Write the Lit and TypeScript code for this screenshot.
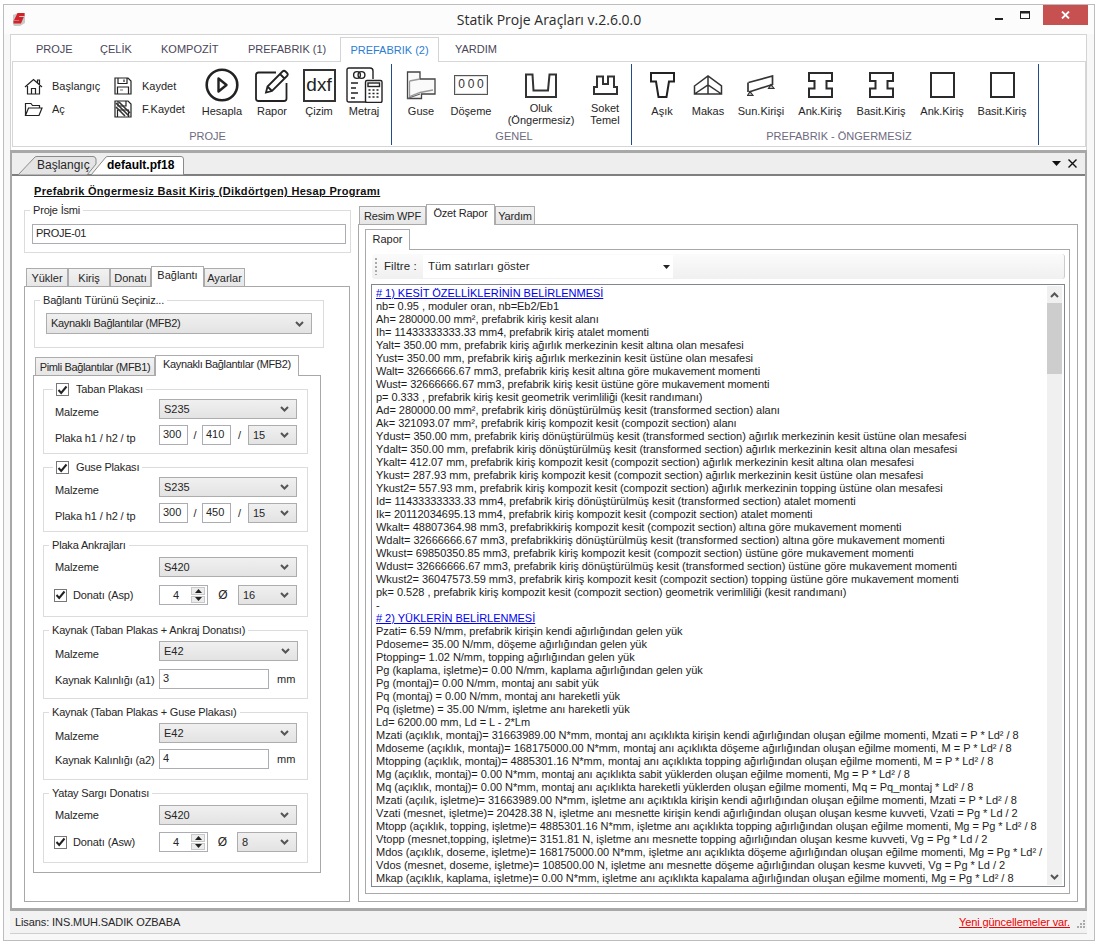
import { LitElement, html, css, svg } from "lit";
import { customElement } from "lit/decorators.js";

const REPORT: [string, boolean?][] = [
  ["# 1) KESİT ÖZELLİKLERİNİN BELİRLENMESİ", true],
  ["nb= 0.95 , moduler oran, nb=Eb2/Eb1"],
  ["Ah= 280000.00 mm², prefabrik kiriş kesit alanı"],
  ["Ih= 11433333333.33 mm4, prefabrik kiriş atalet momenti"],
  ["Yalt= 350.00 mm, prefabrik kiriş ağırlık merkezinin kesit altına olan mesafesi"],
  ["Yust= 350.00 mm, prefabrik kiriş ağırlık merkezinin kesit üstüne olan mesafesi"],
  ["Walt= 32666666.67 mm3, prefabrik kiriş kesit altına göre mukavement momenti"],
  ["Wust= 32666666.67 mm3, prefabrik kiriş kesit üstüne göre mukavement momenti"],
  ["p= 0.333 , prefabrik kiriş kesit geometrik verimliliği (kesit randımanı)"],
  ["Ad= 280000.00 mm², prefabrik kiriş dönüştürülmüş kesit (transformed section) alanı"],
  ["Ak= 321093.07 mm², prefabrik kiriş kompozit kesit (compozit section) alanı"],
  ["Ydust= 350.00 mm, prefabrik kiriş dönüştürülmüş kesit (transformed section) ağırlık merkezinin kesit üstüne olan mesafesi"],
  ["Ydalt= 350.00 mm, prefabrik kiriş dönüştürülmüş kesit (transformed section) ağırlık merkezinin kesit altına olan mesafesi"],
  ["Ykalt= 412.07 mm, prefabrik kiriş kompozit kesit (compozit section) ağırlık merkezinin kesit altına olan mesafesi"],
  ["Ykust= 287.93 mm, prefabrik kiriş kompozit kesit (compozit section) ağırlık merkezinin kesit üstüne olan mesafesi"],
  ["Ykust2= 557.93 mm, prefabrik kiriş kompozit kesit (compozit section) ağırlık merkezinin topping üstüne olan mesafesi"],
  ["Id= 11433333333.33 mm4, prefabrik kiriş dönüştürülmüş kesit (transformed section) atalet momenti"],
  ["Ik= 20112034695.13 mm4, prefabrik kiriş kompozit kesit (compozit section) atalet momenti"],
  ["Wkalt= 48807364.98 mm3, prefabrikkiriş kompozit kesit (compozit section) altına göre mukavement momenti"],
  ["Wdalt= 32666666.67 mm3, prefabrikkiriş dönüştürülmüş kesit (transformed section) altına göre mukavement momenti"],
  ["Wkust= 69850350.85 mm3, prefabrik kiriş kompozit kesit (compozit section) üstüne göre mukavement momenti"],
  ["Wdust= 32666666.67 mm3, prefabrik kiriş dönüştürülmüş kesit (transformed section) üstüne göre mukavement momenti"],
  ["Wkust2= 36047573.59 mm3, prefabrik kiriş kompozit kesit (compozit section) topping üstüne göre mukavement momenti"],
  ["pk= 0.528 , prefabrik kiriş kompozit kesit (compozit section) geometrik verimliliği (kesit randımanı)"],
  ["-"],
  ["# 2) YÜKLERİN BELİRLENMESİ", true],
  ["Pzati= 6.59 N/mm, prefabrik kirişin kendi ağırlığından gelen yük"],
  ["Pdoseme= 35.00 N/mm, döşeme ağırlığından gelen yük"],
  ["Ptopping= 1.02 N/mm, topping ağırlığından gelen yük"],
  ["Pg (kaplama, işletme)= 0.00 N/mm, kaplama ağırlığından gelen yük"],
  ["Pg (montaj)= 0.00 N/mm, montaj anı sabit yük"],
  ["Pq (montaj) = 0.00 N/mm, montaj anı hareketli yük"],
  ["Pq (işletme) = 35.00 N/mm, işletme anı hareketli yük"],
  ["Ld= 6200.00 mm, Ld = L - 2*Lm"],
  ["Mzati (açıklık, montaj)= 31663989.00 N*mm, montaj anı açıklıkta kirişin kendi ağırlığından oluşan eğilme momenti, Mzati = P * Ld² / 8"],
  ["Mdoseme (açıklık, montaj)= 168175000.00 N*mm, montaj anı açıklıkta döşeme ağırlığından oluşan eğilme momenti, M = P * Ld² / 8"],
  ["Mtopping (açıklık, montaj)= 4885301.16 N*mm, montaj anı açıklıkta topping ağırlığından oluşan eğilme momenti, M = P * Ld² / 8"],
  ["Mg (açıklık, montaj)= 0.00 N*mm, montaj anı açıklıkta sabit yüklerden oluşan eğilme momenti, Mg = P * Ld² / 8"],
  ["Mq (açıklık, montaj)= 0.00 N*mm, montaj anı açıklıkta hareketli yüklerden oluşan eğilme momenti, Mq = Pq_montaj * Ld² / 8"],
  ["Mzati (açılık, işletme)= 31663989.00 N*mm, işletme anı açıktıkla kirişin kendi ağırlığından oluşan eğilme momenti, Mzati = P * Ld² / 8"],
  ["Vzati (mesnet, işletme)= 20428.38 N, işletme anı mesnette kirişin kendi ağırlığından oluşan oluşan kesme kuvveti, Vzati = Pg * Ld / 2"],
  ["Mtopp (açıklık, topping, işletme)= 4885301.16 N*mm, işletme anı açıklıkta topping ağırlığından oluşan eğilme momenti, Mg = Pg * Ld² / 8"],
  ["Vtopp (mesnet,topping, işletme)= 3151.81 N, işletme anı mesnette topping ağırlığından oluşan kesme kuvveti, Vg = Pg * Ld / 2"],
  ["Mdos (açıklık, doseme, işletme)= 168175000.00 N*mm, işletme anı açıklıkta döşeme ağırlığından oluşan eğilme momenti, Mg = Pg * Ld² /"],
  ["Vdos (mesnet, doseme, işletme)= 108500.00 N, işletme anı mesnette döşeme ağırlığından oluşan kesme kuvveti, Vg = Pg * Ld / 2"],
  ["Mkap (açıklık, kaplama, işletme)= 0.00 N*mm, işletme anı açıklıkta kapalama ağırlığından oluşan eğilme momenti, Mg = Pg * Ld² / 8"],
];

const ic = (w: number, h: number, body: unknown) =>
  html`<svg width=${w} height=${h} viewBox="0 0 ${w} ${h}" fill="none" stroke="#222" stroke-width="1.2">${body}</svg>`;

const ICONS = {
  home: ic(19, 17, svg`<path d="M1 9 L9.5 1.5 L18 9 M13.5 5 V2 H15.5 V7 M3.5 8 V16 H15.5 V8 M7.5 16 V10.5 H11.5 V16"/>`),
  folder: ic(19, 16, svg`<path d="M1.5 14.5 V2.5 H7 L8.5 4.5 H15.5 V7 M1.5 14.5 L4.5 7 H18 L15 14.5 Z"/>`),
  save: ic(18, 18, svg`<path d="M1 1 H14 L17 4 V17 H1 Z M4 1 V6.5 H13 V1 M10 2.5 V5 M3.5 17 V10 H14.5 V17" /><path d="M6 13 H9" stroke="#888"/>`),
  saveas: ic(18, 18, svg`<path d="M1 1 H14 L17 4 V17 H1 Z M4 1 V6 H12 V1 M3.5 17 V10 H14.5 V17" /><path d="M2 3 L15 16 M5 2 L16 13 M2 7 L11 16" stroke-width="1.6" stroke="#333"/>`),
  play: ic(34, 34, svg`<circle cx="17" cy="17" r="15.3" stroke-width="2.6"/><path d="M13.5 10.5 L21.5 17 L13.5 23.5 Z" stroke-width="2.4" stroke-linejoin="round"/>`),
  report: ic(34, 33, svg`<path d="M21 3.5 H3.5 Q1 3.5 1 6 V29.5 Q1 32 3.5 32 H29 Q31.5 32 31.5 29.5 V14" stroke-width="1.8"/><path d="M11 23.5 L12.5 17.5 L27.5 2.5 Q29 1 30.5 2.5 L32 4 Q33.5 5.5 32 7 L17 22 Z M25 5 L29.5 9.5 M12.5 17.5 L17 22" stroke-width="1.8"/>`),
  metraj: html`<svg width="37" height="36" viewBox="0 0 37 36" fill="none" stroke="#222" stroke-width="1.4"><path d="M21 35 H3 Q1 35 1 33 V3 Q1 1 3 1 H24 Q27 1 27 4 V12" /><circle cx="11" cy="8" r="3.4"/><circle cx="15.5" cy="8" r="3.4"/><path d="M5 16 H12 M5 21 H10 M5 26 H12 M5 31 H9" stroke-width="1.5"/><rect x="19.5" y="13.5" width="16.5" height="22" rx="1.5" fill="#fff"/><rect x="22" y="16" width="11.5" height="3.5" /><path d="M22.5 23 H24.5 M26.5 23 H28.5 M30.5 23 H32.5 M22.5 26.5 H24.5 M26.5 26.5 H28.5 M30.5 26.5 H32.5 M22.5 30 H24.5 M26.5 30 H28.5 M30.5 30 H32.5 " stroke-width="1.6"/></svg>`,
  guse: html`<svg width="30" height="29" viewBox="0 0 30 29" fill="none" stroke="#444" stroke-width="1.3"><path d="M1.5 1 H14 V8 H29 V23 H15.5 V27.5 H1.5 Z" fill="#fafafa"/><path d="M3.5 10 V25.5 L14 21.5 L27 19 M3.5 10 L14 8" stroke="#999"/><path d="M1.5 27.5 L14 23" stroke="#666"/></svg>`,
  oluk: ic(32, 25, svg`<path d="M1 1.5 H7.5 L8.5 17.5 H23 L24.5 1.5 H31 V24 H1 Z" stroke-width="2" stroke="#333"/>`),
  soket: ic(25, 20, svg`<path d="M1 19 V12 H4 V1.5 H10 V9 H15 V1.5 H21 V12 H24 V19 Z" stroke-width="2" stroke="#333"/>`),
  asik: ic(25, 26, svg`<path d="M1 1 H24 V9.5 H19 L16.5 25 H8.5 L6 9.5 H1 Z" stroke-width="2" stroke="#222"/>`),
  makas: ic(30, 22, svg`<path d="M1.5 12 L15 2 L28.5 12 V20 H1.5 Z M15 2 V20 M1.5 20 L15 11 L28.5 20" stroke-width="1.5" stroke="#333"/>`),
  sun: ic(28, 21, svg`<path d="M1.5 7.5 L25.5 1 V9.5 L2 17" stroke-width="1.7" stroke="#333"/><path d="M1 7.5 V17" stroke-width="1.7" stroke="#333"/><path d="M3 16.5 L6 20.5 H0.5 Z M24 9.5 L27 13.5 H21.5 Z" stroke="#333" fill="#bbb" stroke-width="1.2"/>`),
  ibeam: ic(25, 26, svg`<path d="M1 1 H24 V9 H18.5 V16.5 H24 V25 H1 V16.5 H6.5 V9 H1 Z" stroke-width="2" stroke="#2b2b2b"/>`),
  rect: ic(25, 26, svg`<rect x="1" y="1" width="23" height="24" stroke-width="2" stroke="#2b2b2b"/>`),
};

const TOP_TABS = ["PROJE", "ÇELİK", "KOMPOZİT", "PREFABRIK (1)", "PREFABRIK (2)", "YARDIM"];
const TOP_W = [64, 61, 87, 103, 99, 70];
const TOP_P = [11, 11, 11, 11, 0, 16];

const GENEL = [
  { t: ["Guse"], w: 48, i: ICONS.guse },
  { t: ["Döşeme"], w: 52, i: null },
  { t: ["Oluk", "(Öngermesiz)"], w: 88, i: ICONS.oluk },
  { t: ["Soket", "Temel"], w: 40, i: ICONS.soket },
];
const PREF = [
  { t: ["Aşık"], w: 44, i: ICONS.asik },
  { t: ["Makas"], w: 48, i: ICONS.makas },
  { t: ["Sun.Kirişi"], w: 58, i: ICONS.sun },
  { t: ["Ank.Kiriş"], w: 60, i: ICONS.ibeam },
  { t: ["Basit.Kiriş"], w: 62, i: ICONS.ibeam },
  { t: ["Ank.Kiriş"], w: 60, i: ICONS.rect },
  { t: ["Basit.Kiriş"], w: 60, i: ICONS.rect },
];

const chevron = html`<svg class="chev" width="9" height="6" viewBox="0 0 9 6" fill="none" stroke="#555" stroke-width="2"><path d="M1 1 L4.5 4.5 L8 1"/></svg>`;

@customElement("app-root")
export class AppRoot extends LitElement {
  static styles = css`
    :host { display: block; width: 1099px; height: 943px; background: #fff; overflow: hidden;
      font: 11px/13px "Liberation Sans", Arial, sans-serif; color: #262626; }
    * { box-sizing: border-box; }
    .win { margin: 4px 0 0 3px; width: 1092px; height: 937px; border: 1px solid #bdbdbd; background: #fff; display: flex; flex-direction: column; }
    .titlebar { height: 29px; flex: none; display: grid; grid-template-columns: 1fr auto 1fr; background: #fcfcfc; }
    .logo { margin: 7px 0 0 8px; }
    .title { font: 14px/30px "Open Sans", sans-serif; color: #2b2b2b; }
    .wbtns { display: flex; justify-content: flex-end; padding-right: 6px; height: 20px; }
    .wb { width: 26px; height: 20px; display: flex; align-items: center; justify-content: center; }
    .wb.close { width: 45px; background: #c75050; margin-left: 5px; }
    .body { flex: 1; padding: 0 7px 0 6px; background: #f8f8f8; display: flex; flex-direction: column; }
    .ribbonwrap { height: 116px; flex: none; border: 1px solid #d4d4d4; border-bottom: none; background: #fff; display: flex; flex-direction: column; }
    .toptabs { height: 26px; flex: none; display: flex; padding-left: 14px; align-items: flex-end; }
    .tt { height: 24px; line-height: 25px; text-align: left; color: #4a4658; white-space: nowrap; }
    .tt.on { text-align: center; border: 1px solid #d4d4d4; border-bottom: none; background: #fff; color: #2b7cd3; margin-bottom: -1px; height: 25px; position: relative; z-index: 1; }
    .ribbon { height: 86px; flex: none; margin: 0 0 0 1px; border: 1px solid #d6d6d6; display: flex; background: #fff; }
    .grp { display: flex; flex-direction: column; }
    .sep { width: 1px; background: #1f4e8c; margin: 2px 0 1px; flex: none; }
    .g1 { width: 378px; padding-left: 11px; }
    .g2 { width: 239px; padding-left: 5px; }
    .g3 { width: 406px; padding-left: 8px; }
    .items { display: flex; height: 63px; margin-top: 4px; flex: none; }
    .glabel { text-align: center; font-size: 11px; line-height: 13px; color: #6d6a80; margin-top: 1px; }
    .smallcol { display: flex; flex-direction: column; padding-top: 11px; gap: 5px; }
    .sm1 { width: 90px; } .sm2 { width: 83px; }
    .small { display: flex; align-items: center; height: 18px; }
    .smic { width: 28px; flex: none; display: flex; }
    .item { display: flex; flex-direction: column; align-items: center; flex: none; }
    .ibox { height: 38px; flex: none; display: flex; align-items: center; justify-content: center; }
    .ilabel { line-height: 12px; text-align: center; margin-top: 1px; white-space: nowrap; }
    .two .ilabel { margin-top: -2px; }
    .dxf { width: 33px; height: 33px; border: 2px solid #333; text-align: center; font: 19px/28px "Liberation Sans", sans-serif; color: #222; }
    .dose { width: 34px; height: 20px; border: 1.5px solid #555; box-shadow: inset 0 0 0 1px #ddd; font: 12px/17px "Liberation Sans", sans-serif; padding: 0 2px; color: #333; display: flex; justify-content: space-around; }

    .doc { flex: 1; display: flex; flex-direction: column; border: solid #a8a8a8; border-width: 3px 2px 3px 2px; background: #fff; min-height: 0; }
    .docstrip { height: 23px; flex: none; background: #eee; border-bottom: 2px solid #7f7f7f; display: flex; align-items: flex-end; padding-left: 6px; }
    .dtab { display: grid; height: 19px; margin-bottom: -1px; font-size: 12px; line-height: 19px; }
    .dtab > * { grid-area: 1 / 1; }
    .dt1 { width: 79px; }
    .dt1 span { padding-left: 19px; }
    .dt2 { width: 93px; margin-left: -6px; font-weight: bold; color: #000; }
    .dt2 span { padding-left: 16px; }
    .docctl { margin-left: auto; display: flex; align-items: center; gap: 7px; height: 21px; padding-right: 8px; }
    .content { flex: 1; min-height: 0; display: flex; flex-direction: column; }
    .heading { height: 28px; flex: none; padding: 9px 0 0 22px; font-weight: bold; line-height: 13px; letter-spacing: .32px; text-decoration: underline; color: #111; }
    .main { flex: 1; min-height: 0; display: flex; padding: 0 0 6px 12px; }
    .left { width: 327px; flex: none; display: flex; flex-direction: column; padding-top: 6px; }
    .right { width: 720px; flex: none; margin-left: 7px; display: flex; flex-direction: column; }

    .gb { border: 1px solid #dcdcdc; display: flex; flex-direction: column; flex: none; }
    .lg { margin: -7px 0 0 5px; padding: 0 3px; background: #fff; width: fit-content; height: 13px; line-height: 13px; white-space: nowrap; display: flex; align-items: center; gap: 7px; letter-spacing: -.18px; }
    .lg.cl { margin-left: 9px; }
    .proje { height: 43px; }
    .projeinp { margin: 7px 0 0 7px; width: 314px; letter-spacing: -.3px; }
    .inp { height: 20px; border: 1px solid #abadb3; background: #fff; line-height: 17px; padding-left: 3px; flex: none; font-size: 11px; }
    .strip { display: flex; align-items: flex-end; flex: none; height: 20px; }
    .strip.s1 { margin-top: 13px; padding-left: 2px; }
    .tab { height: 18px; border: 1px solid #acacac; border-bottom: none; background: linear-gradient(#f2f2f2, #e6e6e6); text-align: center; line-height: 18px; white-space: nowrap; }
    .tab.on { height: 21px; margin-bottom: -1px; background: #fff; line-height: 17px; position: relative; z-index: 1; }
    .tab.tight { letter-spacing: -.36px; }
    .tab.tight2 { letter-spacing: -.2px; }
    .panel { border: 1px solid #a8a8a8; background: #fff; display: flex; flex-direction: column; }
    .lpanel { flex: 1; width: 326px; }
    .bagl { margin: 13px 0 0 9px; width: 290px; padding-bottom: 13px; }
    .bagl .sel { margin: 6px 0 0 11px; width: 266px; height: 21px; letter-spacing: -.3px; }
    .sel { height: 20px; border: 1px solid #adadad; background: linear-gradient(#f0f0f0, #e3e3e3); display: flex; align-items: center; justify-content: space-between; padding: 0 7px 0 4px; flex: none; font-size: 11px; }
    .strip.s2 { margin: 7px 0 0 8px; padding-left: 2px; }
    .ipanel { margin-left: 8px; width: 288px; height: 498px; padding: 13px 0 0 9px; gap: 13px; }
    .g { width: 265px; }
    .row { display: flex; align-items: center; height: 20px; flex: none; }
    .rl { width: 115px; padding-left: 11px; flex: none; white-space: nowrap; letter-spacing: -.12px; }
    .rl.lo { padding-top: 6px; }
    .rl.lo2 { padding-top: 3px; }
    .rl.chkl { display: flex; align-items: center; gap: 6px; padding-left: 10px; }
    .chk { width: 13px; height: 13px; border: 1px solid #777; background: #fff; flex: none; display: flex; align-items: center; justify-content: center; }
    .w138 { width: 138px; } .w139 { width: 139px; } .w49 { width: 49px; } .w59 { width: 59px; } .w60 { width: 60px; } .w29 { width: 29px; } .w110 { width: 110px; }
    .slash { width: 14px; text-align: center; flex: none; }
    .slash2 { width: 17px; text-align: center; flex: none; }
    .mm { margin-left: 8px; }
    .oslash { width: 30px; text-align: center; flex: none; font-size: 12px; }
    .oslash.b { width: 29px; }
    .spin { width: 49px; height: 20px; border: 1px solid #abadb3; display: flex; flex: none; background: #fff; align-items: stretch; padding: 1px 1px 1px 0; }
    .spinv { flex: 1; text-align: center; line-height: 17px; font-size: 11px; padding-left: 1px; }
    .spinb { width: 14px; display: flex; flex-direction: column; gap: 1px; margin-right: 1px; }
    .spinb span { flex: 1; background: #ececec; border: 1px solid #c8c8c8; display: flex; align-items: center; justify-content: center; }
    .t3 { margin-top: 3px; } .t4 { margin-top: 4px; } .t5 { margin-top: 5px; }
    .g6 { margin-top: 6px; } .g7 { margin-top: 7px; } .g8 { margin-top: 8px; }
    .b8 { padding-bottom: 8px; } .b9 { padding-bottom: 9px; } .b10 { padding-bottom: 10px; } .b11 { padding-bottom: 11px; }

    .strip.s3 { padding-left: 1px; }
    .rpanel { flex: 1; min-height: 0; padding: 4px 0 7px 6px; }
    .strip.s4 { padding-left: 0; height: 20px; flex: none; }
    .strip.s4 .tab.on { height: 21px; width: 45px; line-height: 19px; }
    .rinner { flex: 1; min-height: 0; width: 705px; padding: 4px 0 0 5px; }
    .tool { height: 25px; width: 693px; margin-left: 1px; flex: none; display: flex; align-items: center; background: linear-gradient(#fbfbfb, #f0f0f0); border-right: 1px solid #ccc; border-radius: 3px; }
    .grip { width: 2px; height: 17px; margin-left: 3px; background: repeating-linear-gradient(#aaa 0 2px, transparent 2px 4px); flex: none; }
    .filt { margin-left: 7px; width: 39px; flex: none; font-size: 11.5px; letter-spacing: .1px; }
    .combo { width: 250px; height: 23px; background: #fff; display: flex; align-items: center; justify-content: space-between; padding: 0 3px 0 5px; font-size: 11.5px; letter-spacing: .1px; }
    .tbox { margin-top: 5px; height: 603px; width: 694px; border: 1px solid #82878f; display: flex; background: #fff; flex: none; }
    .ttext { flex: 1; min-width: 0; overflow: hidden; padding: 2px 0 0 4px; }
    .line { height: 13px; line-height: 13px; white-space: nowrap; color: #1c1c1c; font-size: 11px; letter-spacing: -.03px; }
    .line.h { color: #0000ee; text-decoration: underline; }
    .sb { width: 15px; margin: 1px 2px 1px 0; background: #f0f0f0; flex: none; display: flex; flex-direction: column; }
    .sbb { height: 17px; flex: none; display: flex; align-items: center; justify-content: center; }
    .thumb { height: 71px; background: #cdcdcd; flex: none; }
    .sbsp { flex: 1; }

    .status { height: 23px; flex: none; border-bottom: 1px solid #cfcfcf; display: flex; align-items: center; padding-left: 5px; background: #f2f2f2; font-size: 11px; letter-spacing: -.1px; }
    .link { margin-left: auto; color: #e00; text-decoration: underline; }
    .resize { margin: 6px 1px 0 6px; }
    .foot { height: 6px; flex: none; }
  `;

  private tabs(names: string[], widths: number[], on: number, cls = "") {
    return names.map((n, i) => html`<div class="tab ${i === on ? "on" : ""} ${cls}" style="width:${widths[i]}px">${n}</div>`);
  }

  private sel(v: string, cls = "w138") {
    return html`<div class="sel ${cls}"><span>${v}</span>${chevron}</div>`;
  }

  private chk() {
    return html`<span class="chk"><svg width="11" height="10" viewBox="0 0 11 10" fill="none" stroke="#222" stroke-width="2"><path d="M1.5 5 L4.2 8 L9.5 1.5"/></svg></span>`;
  }

  private plate(title: string, v1: string, v2: string) {
    return html`<div class="gb g b8">
      <div class="lg cl">${this.chk()}<span>${title}</span></div>
      <div class="row t3"><span class="rl lo">Malzeme</span>${this.sel("S235")}</div>
      <div class="row g6"><span class="rl lo">Plaka h1 / h2 / tp</span>
        <div class="inp w29">${v1}</div><span class="slash">/</span>
        <div class="inp w29">${v2}</div><span class="slash2">/</span>${this.sel("15", "w49")}</div>
    </div>`;
  }

  private spin(v: string) {
    return html`<div class="spin"><span class="spinv">${v}</span><div class="spinb">
      <span><svg width="7" height="4"><path d="M3.5 0 L7 4 H0 Z" fill="#222"/></svg></span>
      <span><svg width="7" height="4"><path d="M0 0 H7 L3.5 4 Z" fill="#222"/></svg></span></div></div>`;
  }

  private ritem(it: { t: string[]; w: number; i: unknown }) {
    return html`<div class="item ${it.t.length > 1 ? "two" : ""}" style="width:${it.w}px">
      <div class="ibox">${it.i ?? html`<div class="dose"><span>0</span><span>0</span><span>0</span></div>`}</div>
      <div class="ilabel">${it.t.map((l) => html`<div>${l}</div>`)}</div>
    </div>`;
  }

  render() {
    return html`<div class="win">
      <div class="titlebar">
        <div class="logo"><svg width="14" height="15" viewBox="0 0 14 15"><path d="M1 3 L6 1 L13 1 V11 L8 14 H2 L1 12 Z" fill="#c9c9c9"/><path d="M12.5 2.5 H6.5 L4.5 6.5 H9.5 L8 10 H1.5" fill="none" stroke="#d2232a" stroke-width="3"/></svg></div>
        <div class="title">Statik Proje Araçları v.2.6.0.0</div>
        <div class="wbtns">
          <div class="wb"><svg width="9" height="12" viewBox="0 0 9 12"><rect y="9" width="8" height="2" fill="#222"/></svg></div>
          <div class="wb"><svg width="10" height="9" viewBox="0 0 10 9" fill="none" stroke="#222"><rect x=".5" y=".5" width="9" height="7"/><path d="M0 1.5 H10" stroke-width="2"/></svg></div>
          <div class="wb close"><svg width="9" height="8" viewBox="0 0 9 8" stroke="#fff" stroke-width="1.8"><path d="M1 0.5 L8 7.5 M8 0.5 L1 7.5"/></svg></div>
        </div>
      </div>
      <div class="body">
        <div class="ribbonwrap">
          <div class="toptabs">
            ${TOP_TABS.map((n, i) => html`<div class="tt ${i === 4 ? "on" : ""}" style="width:${TOP_W[i]}px;padding-left:${TOP_P[i]}px">${n}</div>`)}
          </div>
          <div class="ribbon">
            <div class="grp g1">
              <div class="items">
                <div class="smallcol sm1">
                  <div class="small"><span class="smic">${ICONS.home}</span>Başlangıç</div>
                  <div class="small"><span class="smic">${ICONS.folder}</span>Aç</div>
                </div>
                <div class="smallcol sm2">
                  <div class="small"><span class="smic">${ICONS.save}</span>Kaydet</div>
                  <div class="small"><span class="smic">${ICONS.saveas}</span>F.Kaydet</div>
                </div>
                ${this.ritem({ t: ["Hesapla"], w: 50, i: ICONS.play })}
                ${this.ritem({ t: ["Rapor"], w: 50, i: ICONS.report })}
                ${this.ritem({ t: ["Çizim"], w: 44, i: html`<div class="dxf">dxf</div>` })}
                ${this.ritem({ t: ["Metraj"], w: 46, i: ICONS.metraj })}
              </div>
              <div class="glabel">PROJE</div>
            </div>
            <div class="sep"></div>
            <div class="grp g2">
              <div class="items">${GENEL.map((g) => this.ritem(g))}</div>
              <div class="glabel">GENEL</div>
            </div>
            <div class="sep"></div>
            <div class="grp g3">
              <div class="items">${PREF.map((g) => this.ritem(g))}</div>
              <div class="glabel">PREFABRIK - ÖNGERMESİZ</div>
            </div>
            <div class="sep"></div>
          </div>
        </div>
        <div class="doc">
          <div class="docstrip">
            <div class="dtab dt1"><svg width="79" height="19" viewBox="0 0 79 19"><path d="M0 19 L17 1 Q17.5 0.5 19 0.5 H75 Q77.5 0.5 78 3 L78 8 L69 19 Z" fill="#e4e4e4" stroke="#8a8a8a"/></svg><span>Başlangıç</span></div>
            <div class="dtab dt2"><svg width="93" height="19" viewBox="0 0 93 19"><path d="M0 19 L15 1 Q15.5 0.5 17 0.5 H90 Q92.5 0.5 92.5 3 V19 Z" fill="#fff" stroke="#8a8a8a"/></svg><span>default.pf18</span></div>
            <div class="docctl">
              <svg width="9" height="5"><path d="M0 0 H9 L4.5 5 Z" fill="#111"/></svg>
              <svg width="9" height="9" stroke="#111" stroke-width="1.4"><path d="M0.5 0.5 L8.5 8.5 M8.5 0.5 L0.5 8.5"/></svg>
            </div>
          </div>
          <div class="content">
            <div class="heading">Prefabrik Öngermesiz Basit Kiriş (Dikdörtgen) Hesap Programı</div>
            <div class="main">
              <div class="left">
                <div class="gb proje">
                  <div class="lg">Proje İsmi</div>
                  <div class="inp projeinp">PROJE-01</div>
                </div>
                <div class="strip s1">${this.tabs(["Yükler", "Kiriş", "Donatı", "Bağlantı", "Ayarlar"], [42, 42, 41, 53, 41], 3)}</div>
                <div class="panel lpanel">
                  <div class="gb bagl">
                    <div class="lg">Bağlantı Türünü Seçiniz...</div>
                    <div class="sel"><span>Kaynaklı Bağlantılar (MFB2)</span>${chevron}</div>
                  </div>
                  <div class="strip s2">${this.tabs(["Pimli Bağlantılar (MFB1)", "Kaynaklı Bağlantılar (MFB2)"], [120, 144], 1, "tight")}</div>
                  <div class="panel ipanel">
                    ${this.plate("Taban Plakası", "300", "410")}
                    ${this.plate("Guse Plakası", "300", "450")}
                    <div class="gb g b11">
                      <div class="lg">Plaka Ankrajları</div>
                      <div class="row t5"><span class="rl">Malzeme</span>${this.sel("S420")}</div>
                      <div class="row g8"><span class="rl chkl">${this.chk()}Donatı (Asp)</span>${this.spin("4")}<span class="oslash">Ø</span>${this.sel("16", "w59")}</div>
                    </div>
                    <div class="gb g b9">
                      <div class="lg">Kaynak (Taban Plakas + Ankraj Donatısı)</div>
                      <div class="row t4"><span class="rl lo">Malzeme</span>${this.sel("E42", "w139")}</div>
                      <div class="row g8"><span class="rl lo2">Kaynak Kalınlığı (a1)</span><div class="inp w110">3</div><span class="mm">mm</span></div>
                    </div>
                    <div class="gb g b10">
                      <div class="lg">Kaynak (Taban Plakas + Guse Plakası)</div>
                      <div class="row t4"><span class="rl lo">Malzeme</span>${this.sel("E42")}</div>
                      <div class="row g6"><span class="rl lo2">Kaynak Kalınlığı (a2)</span><div class="inp w110">4</div><span class="mm">mm</span></div>
                    </div>
                    <div class="gb g b10">
                      <div class="lg">Yatay Sargı Donatısı</div>
                      <div class="row t5"><span class="rl">Malzeme</span>${this.sel("S420")}</div>
                      <div class="row g7"><span class="rl chkl">${this.chk()}Donatı (Asw)</span>${this.spin("4")}<span class="oslash b">Ø</span>${this.sel("8", "w60")}</div>
                    </div>
                  </div>
                </div>
              </div>
              <div class="right">
                <div class="strip s3">${this.tabs(["Resim WPF", "Özet Rapor", "Yardım"], [67, 69, 40], 1, "tight2")}</div>
                <div class="panel rpanel">
                  <div class="strip s4"><div class="tab on">Rapor</div></div>
                  <div class="panel rinner">
                    <div class="tool">
                      <span class="grip"></span>
                      <span class="filt">Filtre :</span>
                      <div class="combo"><span>Tüm satırları göster</span><svg width="7" height="4"><path d="M0 0 H7 L3.5 4 Z" fill="#222"/></svg></div>
                    </div>
                    <div class="tbox">
                      <div class="ttext">${REPORT.map(([t, h]) => html`<div class="line ${h ? "h" : ""}">${t}</div>`)}</div>
                      <div class="sb">
                        <div class="sbb"><svg width="9" height="6" fill="none" stroke="#555" stroke-width="2"><path d="M1 5 L4.5 1.5 L8 5"/></svg></div>
                        <div class="thumb"></div>
                        <div class="sbsp"></div>
                        <div class="sbb"><svg width="9" height="6" fill="none" stroke="#555" stroke-width="2"><path d="M1 1 L4.5 4.5 L8 1"/></svg></div>
                      </div>
                    </div>
                  </div>
                </div>
              </div>
            </div>
          </div>
        </div>
        <div class="status">
          <span>Lisans: INS.MUH.SADIK OZBABA</span>
          <span class="link">Yeni güncellemeler var.</span>
          <svg class="resize" width="10" height="10" fill="#aaa"><rect x="7" y="0" width="2" height="2"/><rect x="4" y="3" width="2" height="2"/><rect x="7" y="3" width="2" height="2"/><rect x="1" y="6" width="2" height="2"/><rect x="4" y="6" width="2" height="2"/><rect x="7" y="6" width="2" height="2"/></svg>
        </div>
        <div class="foot"></div>
      </div>
    </div>`;
  }
}
